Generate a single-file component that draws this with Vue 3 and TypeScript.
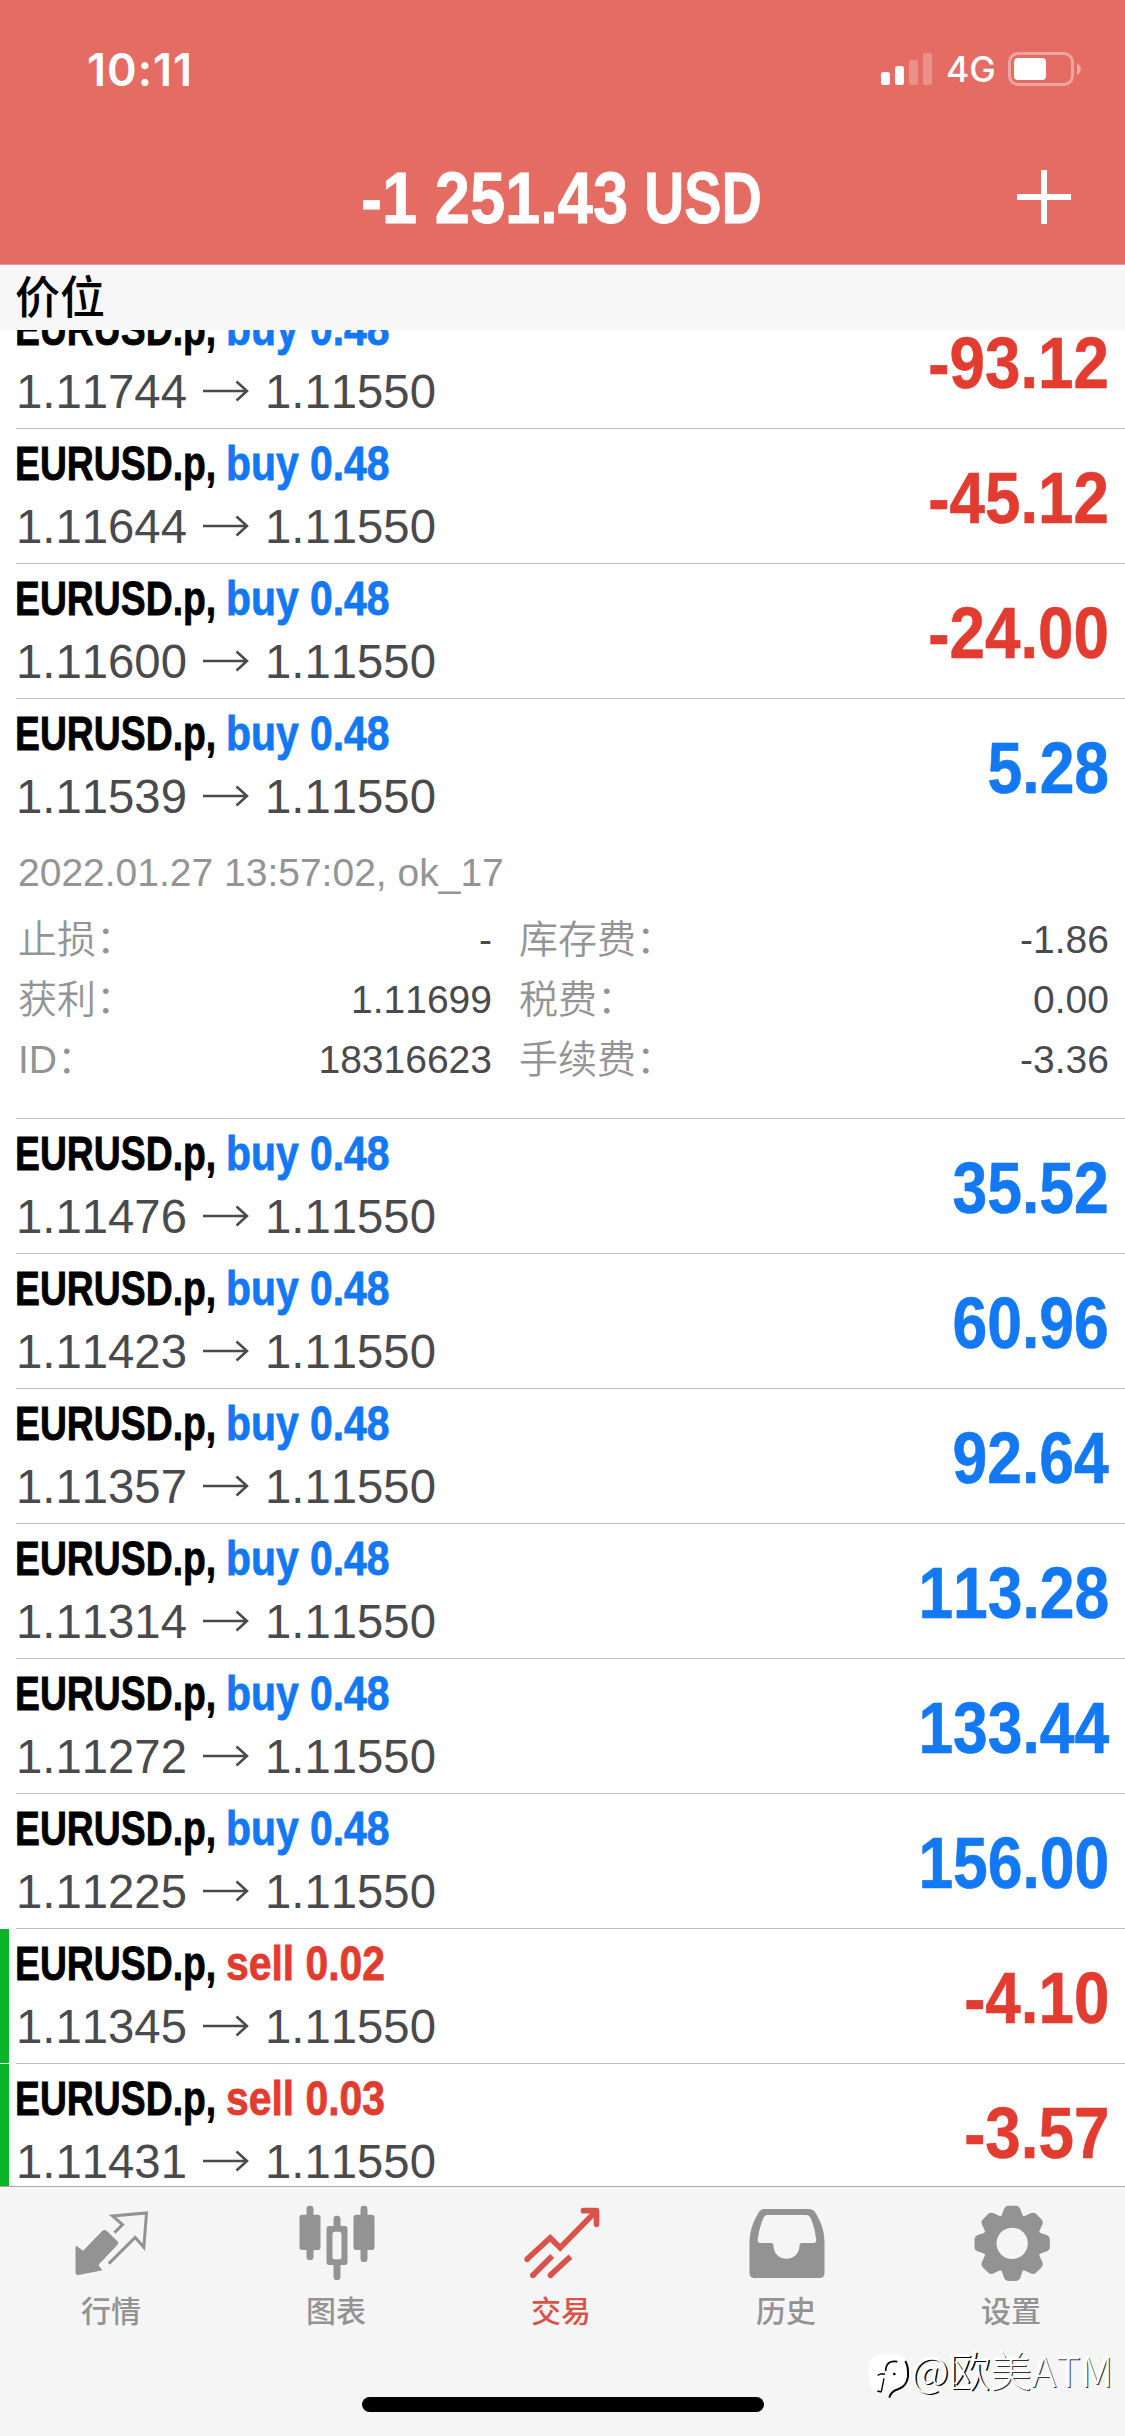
<script setup lang="ts">
interface Position {
  side: 'buy' | 'sell'
  volume: string
  open: string
  profit: string
  marked?: boolean
  expanded?: boolean
}

const buy = (open: string, profit: string, expanded = false): Position => ({
  side: 'buy', volume: '0.48', open, profit, expanded,
})

const positions: Position[] = [
  buy('1.11744', '-93.12'),
  buy('1.11644', '-45.12'),
  buy('1.11600', '-24.00'),
  buy('1.11539', '5.28', true),
  buy('1.11476', '35.52'),
  buy('1.11423', '60.96'),
  buy('1.11357', '92.64'),
  buy('1.11314', '113.28'),
  buy('1.11272', '133.44'),
  buy('1.11225', '156.00'),
  { side: 'sell', volume: '0.02', open: '1.11345', profit: '-4.10', marked: true },
  { side: 'sell', volume: '0.03', open: '1.11431', profit: '-3.57', marked: true },
]

const details = [
  ['止损：', '-', '库存费：', '-1.86'],
  ['获利：', '1.11699', '税费：', '0.00'],
  ['ID：', '18316623', '手续费：', '-3.36'],
]
</script>

<template>
  <div class="screen">
    <header class="header">
      <div class="status">
        <span class="time">10:11</span>
        <div class="indicators">
          <svg class="signal" width="51" height="34" viewBox="0 0 51 34" fill="#fff">
            <rect x="0" y="20" width="9" height="13" rx="2.5" />
            <rect x="14" y="14" width="9" height="19" rx="2.5" />
            <rect x="28" y="8" width="9" height="25" rx="2.5" opacity=".25" />
            <rect x="42" y="1" width="9" height="32" rx="2.5" opacity=".25" />
          </svg>
          <span class="network">4G</span>
          <svg class="battery" width="74" height="34" viewBox="0 0 74 34">
            <rect x="1.5" y="1.5" width="63" height="31" rx="8.5" fill="none" stroke="#fff" stroke-width="3" opacity=".4" />
            <rect x="6" y="6" width="32" height="22" rx="4" fill="#fff" />
            <path d="M69 11.5c5 2 5 9 0 11.500z" fill="#fff" opacity=".45" />
          </svg>
        </div>
      </div>
      <div class="titlebar">
        <div class="total"><span class="amount">-1 251.43</span><span class="currency">USD</span></div>
        <svg class="add" width="54" height="54" viewBox="0 0 54 54" stroke="#fff" stroke-width="6">
          <path d="M27 0V54M0 27H54" />
        </svg>
      </div>
    </header>

    <div class="section">价位</div>

    <main class="list">
      <article
        v-for="p in positions"
        :key="p.open"
        class="row"
        :class="{ marked: p.marked, expanded: p.expanded }"
      >
        <div class="summary">
          <div class="info">
            <div class="name">
              <span class="symbol">EURUSD.p,</span>
              <span class="order" :class="p.side">{{ p.side }} {{ p.volume }}</span>
            </div>
            <div class="prices">
              <span>{{ p.open }}</span>
              <svg class="arrow" width="46" height="22" viewBox="0 0 46 22" fill="none" stroke="#4a4a4c" stroke-width="2.5">
                <path d="M0 11H44M33.500 1.500L44 11L33.500 20.500" />
              </svg>
              <span>1.11550</span>
            </div>
          </div>
          <div class="profit" :class="{ loss: p.profit.startsWith('-') }">{{ p.profit }}</div>
        </div>
        <section v-if="p.expanded" class="details">
          <div class="stamp">2022.01.27 13:57:02, ok_17</div>
          <div v-for="d in details" :key="d[0]" class="detail">
            <div class="pair left"><span class="label">{{ d[0] }}</span><span>{{ d[1] }}</span></div>
            <div class="pair right"><span class="label">{{ d[2] }}</span><span>{{ d[3] }}</span></div>
          </div>
        </section>
      </article>
    </main>

    <footer class="footer">
      <nav class="tabs">
        <div class="tab">
          <svg viewBox="193.500 78 288 288" fill="#939393">
            <path d="M227 227L248 242L305 183Q312 177 319 183L351 214Q356 219 351 224L297 281Q292 286 297 290L306 301L234 315Q225 316 225 307V231Z" />
            <path d="M342 188L366 164L336 138L438 129L430 232L404 202L325 281" fill="none" stroke="#939393" stroke-width="9" />
          </svg>
          <span>行情</span>
        </div>
        <div class="tab">
          <svg viewBox="868.500 78 288 288" fill="#939393">
            <rect x="918" y="107" width="21" height="163" rx="10" />
            <rect x="897" y="134" width="63" height="106" rx="8" />
            <rect x="999" y="137" width="21" height="193" rx="10" />
            <rect x="978" y="168" width="63" height="117" rx="8" />
            <rect x="996" y="185" width="27" height="83" rx="8" fill="#f5f5f5" />
            <rect x="1080" y="107" width="21" height="169" rx="10" />
            <rect x="1059" y="134" width="63" height="106" rx="8" />
          </svg>
          <span>图表</span>
        </div>
        <div class="tab active">
          <svg viewBox="403.500 78 288 288" fill="none" stroke="#d9534a" stroke-width="17">
            <path d="M440 267L509 204L539 233L645 125" />
            <path d="M609 122H648V163" stroke-linecap="round" stroke-linejoin="round" />
            <path d="M515 258L457 316M570 260L509 316" />
            <g fill="#d9534a" stroke="none">
              <circle cx="440" cy="268" r="8.500" /><circle cx="457" cy="316" r="8.500" /><circle cx="510" cy="316" r="8.500" />
            </g>
          </svg>
          <span>交易</span>
        </div>
        <div class="tab">
          <svg viewBox="-61.500 78 288 288" fill="#939393" fill-rule="evenodd">
            <path d="M10 117H145Q158 117 165 128Q192 172 192 214V309Q192 324 177 324H-18Q-33 324 -33 309V214Q-33 172 -6 128Q1 117 10 117ZM20 135Q13 135 9 143Q-3 170 -8 207Q-10 219 0 219H32Q39 219 39 226C39 280 117 280 117 226Q117 219 124 219H159Q169 219 167 207Q162 170 150 143Q146 135 138 135Z" />
          </svg>
          <span>历史</span>
        </div>
        <div class="tab">
          <svg viewBox="613.500 78 288 288" fill="#939393">
            <g transform="translate(755 220)">
              <circle r="86" />
              <path
                v-for="i in 8"
                :key="i"
                :transform="`rotate(${i * 45})`"
                d="M-42 -72Q-31 -80 -27 -96Q-23 -113 -12 -113H12Q23 -113 27 -96Q31 -80 42 -72Z"
              />
              <circle r="47" fill="#f5f5f5" />
            </g>
          </svg>
          <span>设置</span>
        </div>
      </nav>
      <div class="home"></div>
      <div class="watermark">
        <svg width="42" height="48" viewBox="24 54 126 144">
          <rect x="26" y="58" width="118" height="112" rx="38" fill="#fff" />
          <g fill="none" stroke="#000">
            <path d="M136 78Q146 96 144 125Q140 154 116 162Q92 168 88 188" stroke-width="6" />
            <path d="M112 80Q78 74 77 108" stroke-width="5" />
            <path d="M53 121L62 117H75M72 130L64 170M52 168L64 171" stroke-width="4" />
          </g>
          <circle cx="103" cy="117" r="4" />
        </svg>
        <span><span class="strong">@欧</span>美ATM</span>
      </div>
    </footer>
  </div>
</template>

<style>
body { margin: 0; background: #fff; }
</style>

<style scoped>
.screen {
  width: 1125px;
  height: 2436px;
  display: flex;
  flex-direction: column;
  overflow: hidden;
  background: #fff;
  font-family: "Liberation Sans", "Noto Sans CJK SC", sans-serif;
  font-kerning: none;
}
.header {
  flex: none;
  height: 265px;
  box-sizing: border-box;
  background: #e56c62;
  border-bottom: 1px solid #cda29e;
  color: #fff;
}
.status {
  height: 130px;
  padding: 8px 43px 0 87px;
  display: flex;
  justify-content: space-between;
  align-items: center;
  box-sizing: border-box;
  font-family: Inter, sans-serif;
}
.time { font-size: 45px; font-weight: 600; letter-spacing: 1px; }
.indicators { display: flex; align-items: center; }
.network { width: 76px; box-sizing: border-box; padding-left: 14px; font-size: 35.5px; font-weight: 500; }
.titlebar {
  height: 134px;
  display: grid;
  grid-template-columns: 1fr auto 1fr;
  align-items: center;
}
.total {
  grid-column: 2;
  width: 403px;
  padding-top: 1px;
  display: flex;
  justify-content: space-between;
  font-size: 73px;
  font-weight: 700;
  white-space: nowrap;
  -webkit-text-stroke: .8px currentColor;
}
.amount { width: 0; transform: scaleX(.866); transform-origin: left; }
.currency { width: 120px; transform: scaleX(.765); transform-origin: left; }
.add { justify-self: end; margin-right: 54px; }
.section {
  flex: none;
  height: 65px;
  line-height: 67px;
  padding-left: 15px;
  box-sizing: border-box;
  background: #f7f7f7;
  font-size: 45px;
  font-weight: 500;
}
.list { flex: none; height: 1856px; overflow: hidden; }
.row { position: relative; height: 135px; }
.row:first-child { margin-top: -36px; }
.row.expanded { height: 420px; }
.row::after {
  content: "";
  position: absolute;
  left: 16px;
  right: 0;
  bottom: 0;
  height: 1px;
  background: #bebec0;
}
.row.marked::before {
  content: "";
  position: absolute;
  left: 0;
  top: 0;
  bottom: 1px;
  width: 9px;
  background: #0bb52a;
}
.summary {
  height: 134px;
  padding: 0 16px;
  display: flex;
  justify-content: space-between;
}
.name {
  display: flex;
  height: 69px;
  line-height: 69px;
  font-size: 49px;
  font-weight: 700;
  white-space: nowrap;
  -webkit-text-stroke: .8px currentColor;
}
.symbol { width: 211px; transform: scaleX(.762); transform-origin: left; margin-left: -1px; }
.order { transform: scaleX(.834); transform-origin: left; }
.buy { color: #1278f3; }
.sell { color: #e23c30; }
.prices {
  height: 56px;
  display: flex;
  align-items: center;
  font-size: 47.3px;
  color: #4a4a4c;
}
.arrow { margin: 0 16px 0 16px; }
.profit {
  line-height: 138px;
  font-size: 73px;
  font-weight: 700;
  color: #1278f3;
  transform: scaleX(.855);
  transform-origin: right;
  -webkit-text-stroke: .6px currentColor;
}
.profit.loss { color: #e23c30; transform: scaleX(.873); }
.details { color: #4a4a4c; font-size: 39px; padding: 0 16px 0 18px; }
.stamp { height: 77px; line-height: 79px; color: #949494; }
.detail { height: 60px; line-height: 60px; display: flex; }
.pair { display: flex; justify-content: space-between; }
.left { width: 474px; margin-right: 27px; }
.right { flex: 1; }
.label { color: #949494; font-weight: 350; }
.footer {
  position: relative;
  flex: 1;
  background: #f5f5f5;
  border-top: 1px solid #a9a9a9;
}
.tabs { display: flex; padding-top: 9px; }
.tab {
  width: 225px;
  display: flex;
  flex-direction: column;
  align-items: center;
  font-size: 30px;
  font-weight: 500;
  line-height: 36px;
  color: #939393;
}
.tab svg { width: 96px; height: 96px; margin-bottom: 2px; }
.tab span { margin-right: 3px; }
.active { color: #d9534a; }
.home {
  width: 402px;
  height: 15px;
  margin: 67px auto 0;
  border-radius: 8px;
  background: #000;
}
.watermark {
  position: absolute;
  left: 868px;
  top: 166px;
  display: flex;
  align-items: flex-start;
  gap: 1px;
  font-family: "Noto Sans CJK SC", sans-serif;
  font-size: 41.5px;
  font-weight: 300;
  line-height: 33px;
  white-space: nowrap;
  color: #fff;
  text-shadow: 1px 1px 0 #333, -1px -1px 1px #fff;
}
.strong { text-shadow: 1.5px 1px 0 #000, -1px -1px 1px #fff; }
</style>
